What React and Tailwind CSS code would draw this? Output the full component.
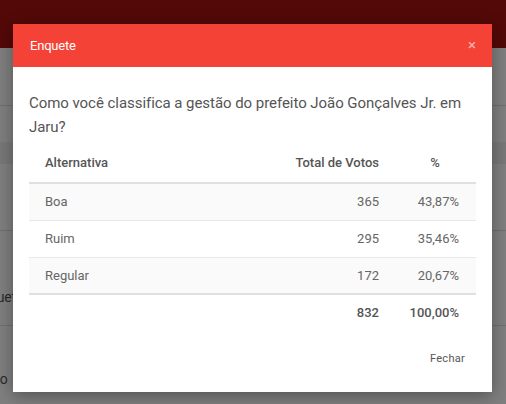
const rows = [
  { name: "Boa", votes: 365, pct: "43,87%" },
  { name: "Ruim", votes: 295, pct: "35,46%" },
  { name: "Regular", votes: 172, pct: "20,67%" },
];

const App = () => {
  return (
    <div
      className="relative h-[404px] w-[506px] overflow-hidden bg-[#7f7f7f]"
      style={{ fontFamily: "Roboto, 'Liberation Sans', sans-serif" }}
    >
      {/* dimmed page behind the modal */}
      <div className="h-[48px] bg-[#530907]" />
      <div className="h-[58px] border-b border-[#6f6f6f]" />
      <div className="h-[36px]" />
      <div className="h-[22px] bg-[#787878]" />
      <div className="h-[67px] border-b border-[#6f6f6f]" />
      <div className="h-[95px] pt-[56px] border-b border-[#6f6f6f] text-[14px] leading-[20px] text-[#2a2a2a] -ml-[27px]">
        Enquete
      </div>
      <div className="pt-[43px] text-[14px] leading-[20px] text-[#2a2a2a] -ml-[8px]">no</div>

      {/* modal */}
      <div className="absolute left-[13px] top-[24px] w-[479px] h-[368px] bg-white shadow-[0_4px_16px_rgba(0,0,0,0.35)] flex flex-col">
        <div className="h-[43px] bg-[#f44336] flex items-center justify-between pl-[17px] pr-[16px]">
          <span className="text-[13px] text-white tracking-[-0.2px]">Enquete</span>
          <span className="text-[15px] text-white/60 leading-none">×</span>
        </div>
        <div className="px-[16px] pt-[24px]">
          <p className="text-[15px] leading-[24px] text-[#555] tracking-[-0.05px]">
            Como você classifica a gestão do prefeito João Gonçalves Jr. em Jaru?
          </p>
          <table className="w-full mt-[5px] text-[13px] text-[#666] border-collapse">
            <thead>
              <tr className="border-b-2 border-[#e0e0e0] h-[39px]">
                <th className="text-left font-medium text-[#555] pl-[16px]">Alternativa</th>
                <th className="text-right font-medium text-[#555] w-[150px]">Total de Votos</th>
                <th className="text-center font-medium text-[#555] w-[97px] pl-[15px]">%</th>
              </tr>
            </thead>
            <tbody>
              {rows.map((r, i) => (
                <tr
                  key={r.name}
                  className={`h-[37px] ${i === 2 ? "border-b-2 border-[#e0e0e0]" : "border-b border-[#e8e8e8]"} ${i % 2 === 0 ? "bg-[#fafafa]" : "bg-white"}`}
                >
                  <td className="pl-[16px]">{r.name}</td>
                  <td className="text-right">{r.votes}</td>
                  <td className="text-right pr-[17px]">{r.pct}</td>
                </tr>
              ))}
              <tr className="h-[37px]">
                <td />
                <td className="text-right font-medium text-[#555]">832</td>
                <td className="text-right pr-[17px] font-medium text-[#555]">100,00%</td>
              </tr>
            </tbody>
          </table>
        </div>
        <div className="mt-auto mb-[25px] flex justify-end pr-[27px]">
          <span className="text-[11px] text-[#555] tracking-wide">Fechar</span>
        </div>
      </div>
    </div>
  );
};

export default App;
